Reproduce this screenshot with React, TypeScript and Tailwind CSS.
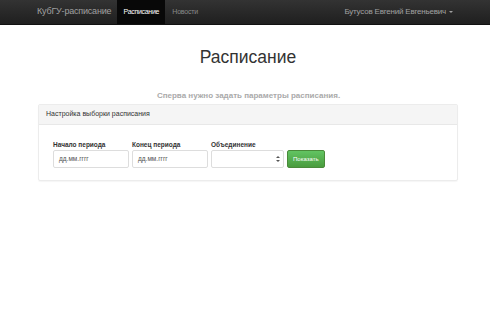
import React from "react";

export default function App() {
  return (
    <div className="w-[490px] h-[324px] bg-white overflow-hidden" style={{ fontFamily: '"Liberation Sans", Arial, sans-serif' }}>
      <div className="h-[25px] bg-gradient-to-b from-[#333333] to-[#1f1f1f] flex items-stretch border-b border-[#111]">
        <div className="pl-[37px] pr-[6px] flex items-center text-[9px] text-[#a0a0a0] tracking-[-0.2px]">КубГУ-расписание</div>
        <div className="w-[48px] bg-[#080808] flex items-center justify-center text-[7px] text-white tracking-[-0.3px]">Расписание</div>
        <div className="px-[7px] flex items-center text-[7px] text-[#8a8a8a] tracking-[-0.2px]">Новости</div>
        <div className="flex-1" />
        <div className="pr-[37px] flex items-center text-[8px] text-[#a0a0a0] tracking-[-0.2px]">
          Бутусов Евгений Евгеньевич
          <span className="ml-[3px] inline-block w-0 h-0 border-l-[2px] border-r-[2px] border-t-[2px] border-l-transparent border-r-transparent border-t-[#a0a0a0]" />
        </div>
      </div>
      <div className="text-center mt-[21px] text-[17.5px] text-[#333] leading-[22px] pl-[6px]">Расписание</div>
      <div className="text-center mt-[22px] text-[8px] font-bold text-[#aaaaaa] leading-[11px] pl-[7px]">Сперва нужно задать параметры расписания.</div>
      <div className="ml-[38px] mt-[3px] w-[420px] h-[77px] border border-[#ececec] rounded-[2px] shadow-[0_1px_1px_rgba(0,0,0,0.04)]">
        <div className="h-[20px] bg-[#f5f5f5] border-b border-[#e8e8e8] flex items-center pl-[7px] text-[7px] text-[#333]">Настройка выборки расписания</div>
        <div className="pl-[14px] pt-[15px] flex items-end gap-[3px]">
          <div className="flex flex-col">
            <div className="text-[6.5px] font-bold text-[#333] leading-[9px] mb-[1px]">Начало периода</div>
            <div className="w-[76px] h-[18px] border border-[#dddddd] rounded-[2px] flex items-center pl-[5px] text-[6.5px] text-[#555]">дд.мм.гггг</div>
          </div>
          <div className="flex flex-col">
            <div className="text-[6.5px] font-bold text-[#333] leading-[9px] mb-[1px]">Конец периода</div>
            <div className="w-[76px] h-[18px] border border-[#dddddd] rounded-[2px] flex items-center pl-[5px] text-[6.5px] text-[#555]">дд.мм.гггг</div>
          </div>
          <div className="flex flex-col">
            <div className="text-[6.5px] font-bold text-[#333] leading-[9px] mb-[1px]">Объединение</div>
            <div className="w-[73px] h-[18px] border border-[#dddddd] rounded-[2px] flex items-center justify-end pr-[3px]">
              <svg width="4" height="8" viewBox="0 0 4 8"><path d="M0 3 L2 1 L4 3 Z M0 5 L2 7 L4 5 Z" fill="#555" /></svg>
            </div>
          </div>
          <div className="h-[18px] px-[5px] bg-gradient-to-b from-[#62c462] to-[#4a9c3e] border border-[#4a8a3a] rounded-[2px] flex items-center text-[6px] text-white">Показать</div>
        </div>
      </div>
    </div>
  );
}
